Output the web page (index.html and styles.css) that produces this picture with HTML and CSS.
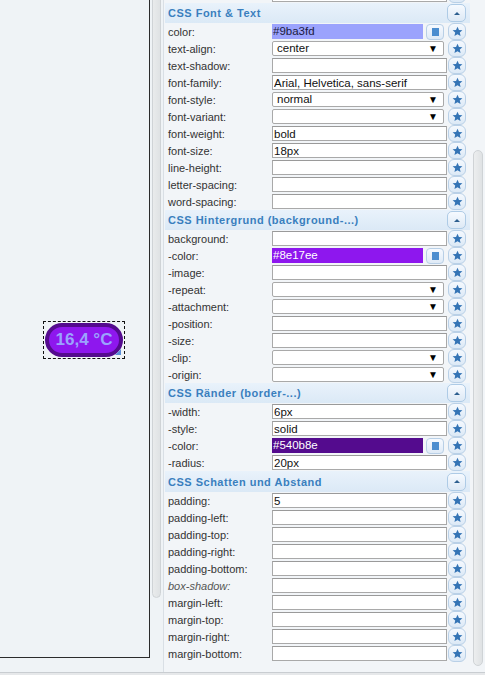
FILE: index.html
```html
<!DOCTYPE html>
<html>
<head>
<meta charset="utf-8">
<link rel="stylesheet" href="styles.css">
</head>
<body>
<svg width="0" height="0" class="defs">
  <defs>
    <symbol id="star" viewBox="0 0 24 24"><path d="M12 1.5l3.2 7 7.5.7-5.7 5 1.7 7.5L12 17.8 5.3 21.7 7 14.2 1.3 9.2l7.5-.7z"/></symbol>
  </defs>
</svg>
<div class="app">
  <div class="left">
    <div class="canvas">
      <div class="sel">
        <div class="pill">16,4 °C</div>
        <span class="grip"></span>
      </div>
    </div>
  </div>
  <div class="lscroll"><div class="lthumb"></div></div>
  <div class="panel">
    <div class="list">
      <div class="row"><span class="lbl"></span><input class="txt" value=""><button class="star"><svg><use href="#star"/></svg></button></div>

      <div class="head"><span>CSS Font &amp; Text</span><button class="fold"><i></i></button></div>
      <div class="row"><span class="lbl">color:</span><div class="colf"><span class="cval c1">#9ba3fd</span><button class="pick"><i></i></button></div><button class="star"><svg><use href="#star"/></svg></button></div>
      <div class="row"><span class="lbl">text-align:</span><div class="sel-box">center<b>▼</b></div><button class="star"><svg><use href="#star"/></svg></button></div>
      <div class="row"><span class="lbl">text-shadow:</span><input class="txt" value=""><button class="star"><svg><use href="#star"/></svg></button></div>
      <div class="row"><span class="lbl">font-family:</span><input class="txt" value="Arial, Helvetica, sans-serif"><button class="star"><svg><use href="#star"/></svg></button></div>
      <div class="row"><span class="lbl">font-style:</span><div class="sel-box">normal<b>▼</b></div><button class="star"><svg><use href="#star"/></svg></button></div>
      <div class="row"><span class="lbl">font-variant:</span><div class="sel-box"><b>▼</b></div><button class="star"><svg><use href="#star"/></svg></button></div>
      <div class="row"><span class="lbl">font-weight:</span><input class="txt" value="bold"><button class="star"><svg><use href="#star"/></svg></button></div>
      <div class="row"><span class="lbl">font-size:</span><input class="txt" value="18px"><button class="star"><svg><use href="#star"/></svg></button></div>
      <div class="row"><span class="lbl">line-height:</span><input class="txt" value=""><button class="star"><svg><use href="#star"/></svg></button></div>
      <div class="row"><span class="lbl">letter-spacing:</span><input class="txt" value=""><button class="star"><svg><use href="#star"/></svg></button></div>
      <div class="row"><span class="lbl">word-spacing:</span><input class="txt" value=""><button class="star"><svg><use href="#star"/></svg></button></div>

      <div class="head"><span>CSS Hintergrund (background-...)</span><button class="fold"><i></i></button></div>
      <div class="row"><span class="lbl">background:</span><input class="txt" value=""><button class="star"><svg><use href="#star"/></svg></button></div>
      <div class="row"><span class="lbl">-color:</span><div class="colf"><span class="cval c2">#8e17ee</span><button class="pick"><i></i></button></div><button class="star"><svg><use href="#star"/></svg></button></div>
      <div class="row"><span class="lbl">-image:</span><input class="txt" value=""><button class="star"><svg><use href="#star"/></svg></button></div>
      <div class="row"><span class="lbl">-repeat:</span><div class="sel-box"><b>▼</b></div><button class="star"><svg><use href="#star"/></svg></button></div>
      <div class="row"><span class="lbl">-attachment:</span><div class="sel-box"><b>▼</b></div><button class="star"><svg><use href="#star"/></svg></button></div>
      <div class="row"><span class="lbl">-position:</span><input class="txt" value=""><button class="star"><svg><use href="#star"/></svg></button></div>
      <div class="row"><span class="lbl">-size:</span><input class="txt" value=""><button class="star"><svg><use href="#star"/></svg></button></div>
      <div class="row"><span class="lbl">-clip:</span><div class="sel-box"><b>▼</b></div><button class="star"><svg><use href="#star"/></svg></button></div>
      <div class="row"><span class="lbl">-origin:</span><div class="sel-box"><b>▼</b></div><button class="star"><svg><use href="#star"/></svg></button></div>

      <div class="head"><span>CSS Ränder (border-...)</span><button class="fold"><i></i></button></div>
      <div class="row"><span class="lbl">-width:</span><input class="txt" value="6px"><button class="star"><svg><use href="#star"/></svg></button></div>
      <div class="row"><span class="lbl">-style:</span><input class="txt" value="solid"><button class="star"><svg><use href="#star"/></svg></button></div>
      <div class="row"><span class="lbl">-color:</span><div class="colf"><span class="cval c3">#540b8e</span><button class="pick"><i></i></button></div><button class="star"><svg><use href="#star"/></svg></button></div>
      <div class="row"><span class="lbl">-radius:</span><input class="txt" value="20px"><button class="star"><svg><use href="#star"/></svg></button></div>

      <div class="head last"><span>CSS Schatten und Abstand</span><button class="fold"><i></i></button></div>
      <div class="row"><span class="lbl">padding:</span><input class="txt" value="5"><button class="star"><svg><use href="#star"/></svg></button></div>
      <div class="row"><span class="lbl">padding-left:</span><input class="txt" value=""><button class="star"><svg><use href="#star"/></svg></button></div>
      <div class="row"><span class="lbl">padding-top:</span><input class="txt" value=""><button class="star"><svg><use href="#star"/></svg></button></div>
      <div class="row"><span class="lbl">padding-right:</span><input class="txt" value=""><button class="star"><svg><use href="#star"/></svg></button></div>
      <div class="row"><span class="lbl">padding-bottom:</span><input class="txt" value=""><button class="star"><svg><use href="#star"/></svg></button></div>
      <div class="row"><span class="lbl ital">box-shadow:</span><input class="txt" value=""><button class="star"><svg><use href="#star"/></svg></button></div>
      <div class="row"><span class="lbl">margin-left:</span><input class="txt" value=""><button class="star"><svg><use href="#star"/></svg></button></div>
      <div class="row"><span class="lbl">margin-top:</span><input class="txt" value=""><button class="star"><svg><use href="#star"/></svg></button></div>
      <div class="row"><span class="lbl">margin-right:</span><input class="txt" value=""><button class="star"><svg><use href="#star"/></svg></button></div>
      <div class="row"><span class="lbl">margin-bottom:</span><input class="txt" value=""><button class="star"><svg><use href="#star"/></svg></button></div>
    </div>
  </div>
  <div class="rscroll"><div class="rthumb"></div></div>
</div>
<div class="status"></div>
</body>
</html>
```

FILE: styles.css
```css
* { box-sizing: border-box; }
html, body { margin: 0; padding: 0; }
body {
  width: 485px;
  height: 675px;
  overflow: hidden;
  background: #eff3f6;
  font-family: "Liberation Sans", Arial, sans-serif;
  font-size: 11px;
  color: #333;
}
.defs { position: absolute; }

.app {
  display: flex;
  height: 672px;
  overflow: hidden;
}

/* left canvas */
.left {
  width: 150px;
  flex: none;
  background: #eff3f6;
}
.canvas {
  position: relative;
  width: 150px;
  height: 658px;
  border-right: 1px solid #2b2b2b;
  border-bottom: 1px solid #2b2b2b;
}
.sel {
  position: absolute;
  left: 43px;
  top: 321px;
  border: 1px dashed #111;
  padding: 1px;
}
.pill {
  width: 78px;
  height: 34px;
  border: 4px solid #540b8e;
  border-radius: 20px;
  background: #8e17ee;
  color: #9ba3fd;
  font-weight: bold;
  font-size: 17px;
  line-height: 26px;
  text-align: center;
}
.grip {
  position: absolute;
  right: 3px;
  bottom: 3px;
  width: 0;
  height: 0;
  border-left: 6px solid transparent;
  border-bottom: 6px solid #5b8fd8;
}

/* left scrollbar */
.lscroll {
  width: 13px;
  flex: none;
  padding-left: 2px;
}
.lthumb {
  width: 9px;
  height: 604px;
  margin-top: -6px;
  border: 1px solid #cfd3d6;
  border-radius: 5px;
  background: linear-gradient(to right, #e9ebec, #dfe2e4);
}

/* right panel */
.panel {
  width: 307px;
  flex: none;
  border-left: 1px solid #d9dfe5;
  background: #f2f5f8;
  padding-left: 1px;
  overflow: hidden;
}
.list {
  margin-top: -14px;
}
.head {
  display: flex;
  align-items: center;
  justify-content: space-between;
  height: 20px;
  padding-left: 3px;
  padding-right: 4px;
  background: linear-gradient(#e9f2fb, #dbe9f6);
  color: #3a7fbe;
  font-weight: bold;
  font-size: 11px;
  letter-spacing: 0.5px;
}
.head.last { height: 21px; }
.fold {
  width: 19px;
  height: 18px;
  padding: 0;
  border: 1px solid #aecbe6;
  border-radius: 5px;
  background: linear-gradient(#f6faff, #dde9f5);
  display: flex;
  align-items: center;
  justify-content: center;
}
.fold i {
  width: 0;
  height: 0;
  border-left: 3px solid transparent;
  border-right: 3px solid transparent;
  border-bottom: 3px solid #2d5f8f;
}
.row {
  display: grid;
  grid-template-columns: 103px 175px 18px;
  column-gap: 1px;
  align-items: center;
  height: 17px;
  padding-left: 3px;
}
.lbl {
  color: #333;
  white-space: nowrap;
  font-size: 11px;
}
.lbl.ital { font-style: italic; color: #555; }
.txt {
  height: 15px;
  width: 175px;
  margin: 0;
  padding: 0 1px;
  border: 1px solid #a9a9a9;
  border-top-color: #9a9a9a;
  background: #fff;
  font-family: "Liberation Sans", Arial, sans-serif;
  font-size: 11.5px;
  color: #111;
  outline: none;
}
.sel-box {
  position: relative;
  width: 172px;
  height: 15px;
  border: 1px solid #a9a9a9;
  border-radius: 2px;
  background: #fff;
  padding-left: 4px;
  line-height: 13px;
  font-size: 11.5px;
  color: #111;
}
.sel-box b {
  position: absolute;
  right: 5px;
  top: 0;
  font-size: 10px;
  line-height: 13px;
  font-weight: normal;
  color: #000;
}
.colf {
  display: flex;
  align-items: center;
  gap: 3px;
  width: 175px;
}
.cval {
  width: 151px;
  height: 15px;
  line-height: 15px;
  padding-left: 1px;
  font-size: 11.5px;
}
.c1 { background: #9ba3fd; color: #1a1a40; }
.c2 { background: #8e17ee; color: #fff; }
.c3 { background: #540b8e; color: #fff; }
.pick {
  width: 18px;
  height: 16px;
  padding: 0;
  border: 1px solid #b8cfe6;
  border-radius: 4px;
  background: linear-gradient(#f6faff, #dfeaf6);
  display: flex;
  align-items: center;
  justify-content: center;
}
.pick i {
  width: 7px;
  height: 8px;
  background: #4b8dcf;
}
.star {
  width: 18px;
  height: 17px;
  padding: 0;
  border: 1px solid #b9d0e7;
  border-radius: 6px;
  background: linear-gradient(#f5f9fe, #dce9f6);
  display: flex;
  align-items: center;
  justify-content: center;
}
.star svg {
  width: 11px;
  height: 11px;
  fill: #3474b5;
}

/* right scrollbar */
.rscroll {
  flex: 1;
  padding-left: 3px;
  padding-top: 150px;
  background: #f2f5f8;
}
.rthumb {
  width: 10px;
  height: 516px;
  border: 1px solid #cfd3d6;
  border-radius: 5px;
  background: linear-gradient(to right, #eceeef, #dfe2e4);
}

.status {
  height: 3px;
  border-top: 1px solid #c9cdd1;
  background: #e6e8ea;
}
```
